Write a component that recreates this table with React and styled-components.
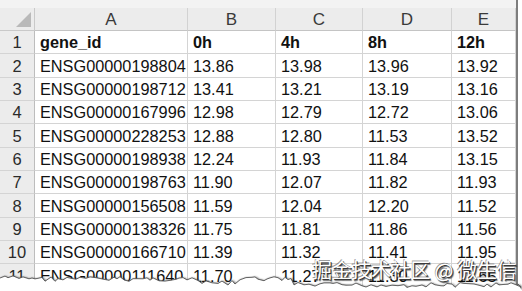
import React from "react";
import styled, { createGlobalStyle } from "styled-components";

const GlobalStyle = createGlobalStyle`
  html, body { margin: 0; padding: 0; background: #ffffff; }
  body { font-family: "Liberation Sans", Arial, sans-serif; }
`;

const Page = styled.div`
  position: relative;
  width: 522px;
  height: 291px;
  overflow: hidden;
  background: #ffffff;
`;

const Sheet = styled.div`
  width: 516px;
  border-right: 2px solid #7d7d7d;
  background: #ffffff;
  display: flex;
  flex-direction: column;
`;

const TopBand = styled.div`
  height: 8px;
  background: #f3f3f3;
`;

const Grid = styled.div`
  display: grid;
  grid-template-columns: 35px 153px 88px 87px 89px 64px;
  grid-template-rows: 23px;
  grid-auto-rows: 23.33px;
`;

const Corner = styled.div`
  position: relative;
  background: #ececec;
  border-right: 1px solid #c9c9c9;
  border-bottom: 1px solid #c9c9c9;
  &::after {
    content: "";
    position: absolute;
    right: 3px;
    bottom: 3px;
    width: 0;
    height: 0;
    border-left: 15px solid transparent;
    border-bottom: 15px solid #b9b9b9;
  }
`;

const ColHeader = styled.div`
  background: #ececec;
  border-right: 1px solid #d2d2d2;
  border-bottom: 1px solid #c4c4c4;
  display: flex;
  align-items: center;
  justify-content: center;
  font-size: 17px;
  color: #3a3a3a;
  padding-top: 2px;
  box-sizing: border-box;
`;

const RowHeader = styled.div`
  background: #ececec;
  border-right: 1px solid #bdbdbd;
  border-bottom: 1px solid #d4d4d4;
  display: flex;
  align-items: flex-end;
  justify-content: center;
  font-size: 16.5px;
  line-height: 20px;
  color: #2a2a2a;
  padding-bottom: 1px;
  box-sizing: border-box;
`;

const Cell = styled.div`
  border-right: 1px solid #d4d4d4;
  border-bottom: 1px solid #d4d4d4;
  display: flex;
  align-items: flex-end;
  padding: 0 0 1px 5px;
  box-sizing: border-box;
  font-size: 16.3px;
  line-height: 20px;
  color: #111111;
  font-weight: ${(p) => (p.$bold ? 700 : 400)};
  white-space: nowrap;
  overflow: hidden;
`;

const Tear = styled.svg`
  position: absolute;
  left: 0;
  top: 0;
  width: 522px;
  height: 291px;
  pointer-events: none;
`;

const Watermark = styled.div`
  position: absolute;
  left: 312px;
  top: 257px;
  font-family: "Noto Sans CJK SC", "Noto Sans", sans-serif;
  font-size: 20px;
  line-height: 26px;
  color: #ffffff;
  white-space: nowrap;
  letter-spacing: -0.3px;
  text-shadow: 1px 1px 0 #3a3a3a, 1.5px 1.5px 1px rgba(0, 0, 0, 0.55),
    -0.6px -0.6px 0 rgba(90, 90, 90, 0.6);
`;

const cols = ["A", "B", "C", "D", "E"];

const rows = [
  ["gene_id", "0h", "4h", "8h", "12h"],
  ["ENSG00000198804", "13.86", "13.98", "13.96", "13.92"],
  ["ENSG00000198712", "13.41", "13.21", "13.19", "13.16"],
  ["ENSG00000167996", "12.98", "12.79", "12.72", "13.06"],
  ["ENSG00000228253", "12.88", "12.80", "11.53", "13.52"],
  ["ENSG00000198938", "12.24", "11.93", "11.84", "13.15"],
  ["ENSG00000198763", "11.90", "12.07", "11.82", "11.93"],
  ["ENSG00000156508", "11.59", "12.04", "12.20", "11.52"],
  ["ENSG00000138326", "11.75", "11.81", "11.86", "11.56"],
  ["ENSG00000166710", "11.39", "11.32", "11.41", "11.95"],
  ["ENSG00000111640", "11.70", "11.27", "11.30", "11.65"],
];

function baseY(x) {
  if (x < 40) return 278;
  if (x < 195) return 279;
  if (x < 240) return 283;
  if (x < 292) return 279;
  return 285;
}

function tearPoints() {
  let seed = 7;
  const rnd = () => {
    seed = (seed * 9301 + 49297) % 233280;
    return seed / 233280;
  };
  const pts = [];
  for (let x = 0; x <= 522; x += 3 + Math.floor(rnd() * 4)) {
    const amp = rnd() * 5 - 2.5;
    pts.push([x, baseY(x) + amp]);
  }
  pts.push([518, 284]);
  return pts;
}

const pts = tearPoints();
const line = pts.map((p, i) => `${i ? "L" : "M"}${p[0].toFixed(1)} ${p[1].toFixed(1)}`).join(" ");
const area = `${line} L522 291 L0 291 Z`;

export default function App() {
  return (
    <Page>
      <GlobalStyle />
      <Sheet>
        <TopBand />
        <Grid>
          <Corner />
          {cols.map((c) => (
            <ColHeader key={c}>{c}</ColHeader>
          ))}
          {rows.map((r, i) => (
            <React.Fragment key={i}>
              <RowHeader>{i + 1}</RowHeader>
              {r.map((v, j) => (
                <Cell key={j} $bold={i === 0}>
                  {v}
                </Cell>
              ))}
            </React.Fragment>
          ))}
        </Grid>
      </Sheet>
      <Tear viewBox="0 0 522 291">
        <defs>
          <filter id="sh" x="-5%" y="-50%" width="110%" height="200%">
            <feGaussianBlur stdDeviation="0.8" />
          </filter>
        </defs>
        <path d={line} transform="translate(0.8 1.2)" stroke="#222" strokeWidth="1.6" fill="none" filter="url(#sh)" />
        <path d={area} fill="#ffffff" />
        <path d={line} stroke="#555" strokeWidth="0.9" fill="none" />
      </Tear>
      <Watermark>掘金技术社区 @ 微生信</Watermark>
    </Page>
  );
}
